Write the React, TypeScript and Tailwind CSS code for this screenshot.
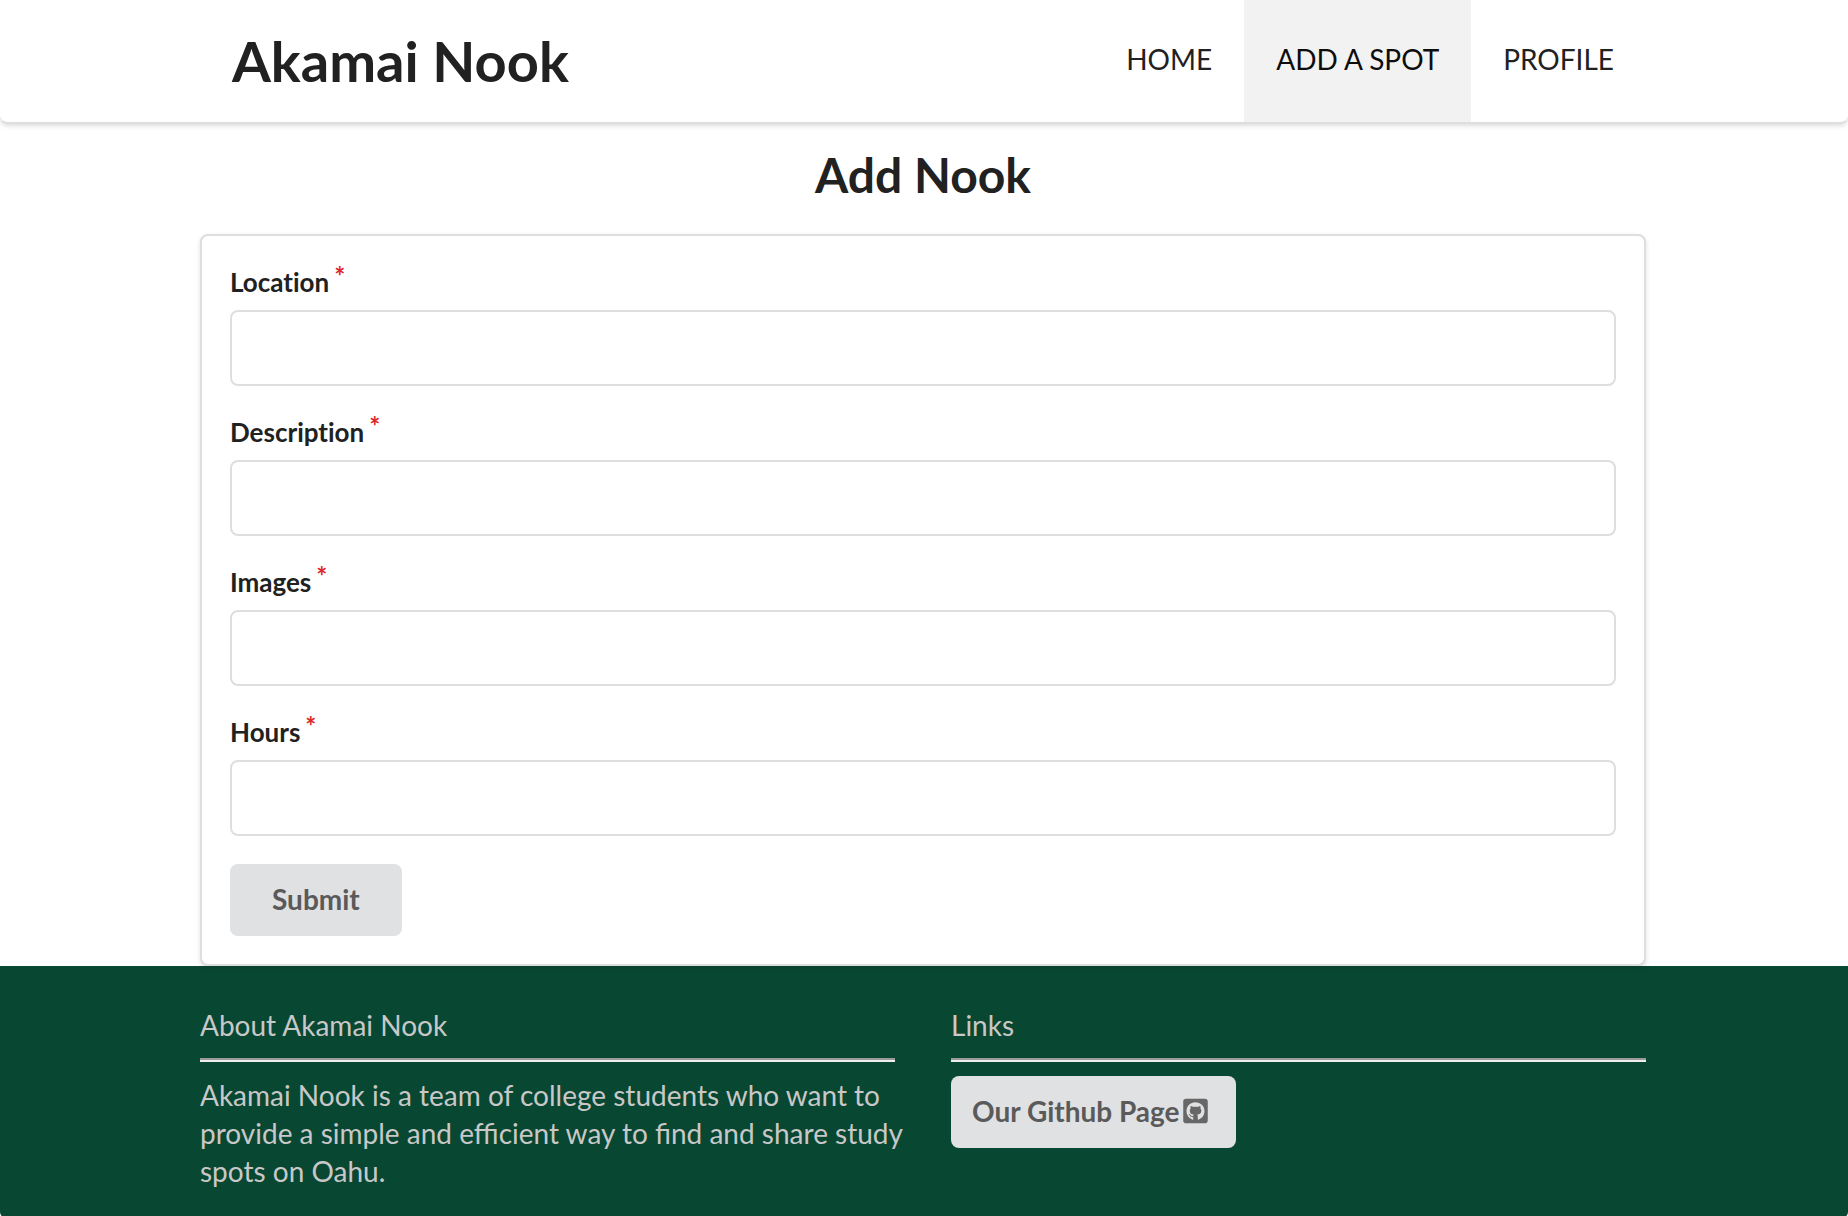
import { useState } from "react";
import { FaGithubSquare } from "react-icons/fa";

const navItems = ["HOME", "ADD A SPOT", "PROFILE"];
const fields = ["Location", "Description", "Images", "Hours"];

function NavBar() {
  return (
    <header className="relative z-10 flex justify-center rounded-b-lg border-b-2 border-[#dededf] bg-white pr-0.5 shadow-[0_2px_4px_rgba(34,36,38,0.15)]">
      <div className="flex h-[122px] w-full max-w-[1446px] items-stretch justify-between">
        <a href="#" className="flex items-center px-8">
          <h1 className="text-[56px] leading-[72px] font-bold text-[#212121]">Akamai Nook</h1>
        </a>
        <nav className="flex">
          {navItems.map((item) => (
            <a
              key={item}
              href="#"
              aria-current={item === "ADD A SPOT" ? "page" : undefined}
              className="flex items-center px-8 pb-1 text-[28px] leading-7 text-[#212121] aria-[current=page]:bg-[#f2f2f2] aria-[current=page]:text-[#0d0d0d]"
            >
              {item}
            </a>
          ))}
        </nav>
      </div>
    </header>
  );
}

function Field({ label }: { label: string }) {
  const id = label.toLowerCase();
  const [value, setValue] = useState("");
  return (
    <div className="mb-7">
      <label
        htmlFor={id}
        className="mb-2.5 flex h-9 gap-[5px] text-[26px] leading-9 font-bold text-[#212121] [font-variant-ligatures:none]"
      >
        {label}
        <span aria-hidden="true" className="-mt-1.5 text-[#db2828]">*</span>
      </label>
      <input
        id={id}
        type="text"
        required
        value={value}
        onChange={(event) => setValue(event.target.value)}
        className="block h-[76px] w-full rounded-lg border-2 border-[#dededf] bg-white px-7 text-[28px] text-[#212121] outline-none focus:border-[#85b7d9]"
      />
    </div>
  );
}

function AddNookForm() {
  return (
    <main className="relative flex justify-center pr-0.5">
      <div className="w-full max-w-[1446px]">
        <h2 className="pt-5 pb-7 text-center text-5xl leading-[62px] font-bold text-[#212121]">Add Nook</h2>
        <form
          onSubmit={(event) => event.preventDefault()}
          className="rounded-lg border-2 border-[#dededf] bg-white p-7 shadow-[0_2px_4px_rgba(34,36,38,0.15)]"
        >
          {fields.map((label) => (
            <Field key={label} label={label} />
          ))}
          <button
            type="submit"
            className="block h-[72px] rounded-lg bg-[#e0e1e2] px-[42px] pb-0.5 text-[28px] leading-7 font-bold text-[#5a5a5a]"
          >
            Submit
          </button>
        </form>
      </div>
    </main>
  );
}

function ColumnTitle({ children }: { children: string }) {
  return (
    <>
      <h3 className="text-[28px] leading-[38px] text-[#c8c8c8]">{children}</h3>
      <hr className="mt-3.5 mb-3.5 h-1 border-t-2 border-b-2 border-t-[#9a9a9a] border-b-[#eeeeee]" />
    </>
  );
}

function Footer() {
  return (
    <footer className="flex flex-1 justify-center rounded-b-md bg-[#084731] pt-10 pr-0.5 pb-7">
      <div className="grid w-full max-w-[1446px] grid-cols-2 gap-14">
        <section>
          <ColumnTitle>About Akamai Nook</ColumnTitle>
          <p className="-mr-4 text-[28px] leading-[38px] text-[#c8c8c8]">
            Akamai Nook is a team of college students who want to provide a simple and efficient way to find and share
            study spots on Oahu.
          </p>
        </section>
        <section>
          <ColumnTitle>Links</ColumnTitle>
          <a
            href="#"
            className="inline-flex h-[72px] items-center rounded-lg bg-[#e0e1e2] pr-7 pb-0.5 pl-[21px] text-[28px] leading-7 font-bold text-[#5a5a5a]"
          >
            Our Github Page
            <FaGithubSquare aria-hidden="true" className="ml-[3px] h-7 w-[25px] opacity-90" />
          </a>
        </section>
      </div>
    </footer>
  );
}

export default function App() {
  return (
    <div className="flex min-h-screen flex-col bg-white font-['Lato',sans-serif]">
      <NavBar />
      <AddNookForm />
      <Footer />
    </div>
  );
}
